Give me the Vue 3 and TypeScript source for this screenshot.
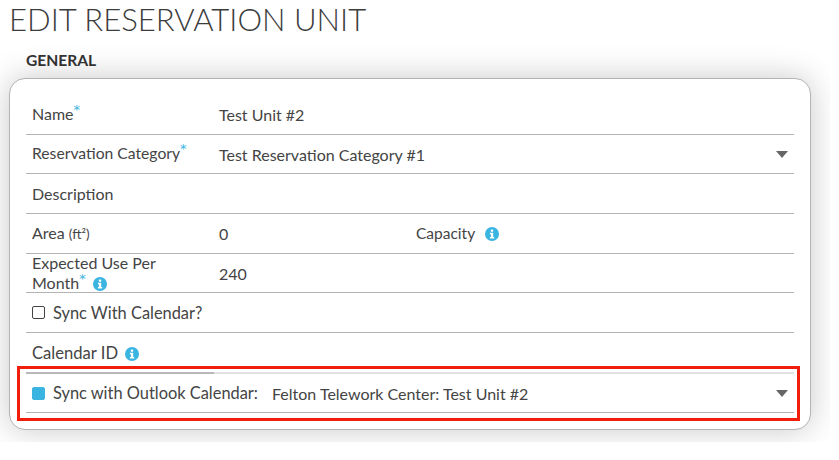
<template>
  <div class="page">
    <h1 class="title">EDIT RESERVATION UNIT</h1>
    <h2 class="section">GENERAL</h2>
    <div class="card">
      <div class="row">
        <div class="label lift">Name<sup class="req">*</sup></div>
        <div class="value">{{ unit.name }}</div>
      </div>
      <div class="row">
        <div class="label tight lift">Reservation Category<sup class="req">*</sup></div>
        <div class="value grow">{{ unit.category }}</div>
        <span class="arrow"></span>
      </div>
      <div class="row">
        <div class="label">Description</div>
      </div>
      <div class="row">
        <div class="label lift">Area <span class="unit">(ft²)</span></div>
        <div class="value mid">{{ unit.area }}</div>
        <div class="label tighter">
          Capacity
          <svg class="info wide" viewBox="0 0 14 14"><use href="#info-icon" /></svg>
        </div>
      </div>
      <div class="row">
        <div class="label two-line">
          Expected Use Per<br />Month<sup class="req">*</sup>
          <svg class="info wider" viewBox="0 0 14 14"><use href="#info-icon" /></svg>
        </div>
        <div class="value">{{ unit.expectedUse }}</div>
      </div>
      <div class="row">
        <span class="check"></span>
        <span class="check-label">Sync With Calendar?</span>
      </div>
      <div class="row row-plain">
        <div class="label big">
          Calendar ID
          <svg class="info" viewBox="0 0 14 14"><use href="#info-icon" /></svg>
        </div>
      </div>
      <div class="rule"><div class="rule-dark"></div></div>
      <div class="row row-last">
        <span class="check on"></span>
        <span class="check-label outlook lift">Sync with Outlook Calendar:</span>
        <div class="grow">{{ unit.outlook }}</div>
        <span class="arrow"></span>
      </div>
      <div class="highlight"></div>
    </div>
    <svg class="defs" width="0" height="0">
      <symbol id="info-icon" viewBox="0 0 14 14">
        <circle cx="7" cy="7" r="7" fill="#3ab4e0" />
        <rect x="5.8" y="2.5" width="2.4" height="2.2" rx="0.5" fill="#fff" />
        <path d="M4.9 5.8H8.2V9.9H9.2V11.4H4.9V9.9H5.9V7.3H4.9Z" fill="#fff" />
      </symbol>
    </svg>
  </div>
</template>

<script setup lang="ts">
const unit = {
  name: 'Test Unit #2',
  category: 'Test Reservation Category #1',
  area: 0,
  expectedUse: 240,
  outlook: 'Felton Telework Center: Test Unit #2',
};
</script>

<style>
html,
body {
  margin: 0;
  background: #fff;
}
</style>

<style scoped>
.page {
  width: 830px;
  height: 442px;
  overflow: hidden;
  font-family: Lato, "Liberation Sans", sans-serif;
  color: #444;
}
.title {
  margin: 0;
  padding: 0 0 0 9px;
  font-size: 31.1px;
  line-height: 38px;
  font-weight: 300;
  color: #3c3c3c;
}
.section {
  margin: 0;
  padding: 13px 0 0 26px;
  height: 27px;
  box-sizing: border-box;
  font-size: 15.6px;
  line-height: 19px;
  font-weight: 700;
  color: #333;
}
.card {
  position: relative;
  box-sizing: border-box;
  margin: 13px 0 0 9px;
  width: 802px;
  height: 352px;
  padding: 16px 16px 0;
  background: #fff;
  border: 1px solid #b4b4b4;
  border-radius: 16px;
  box-shadow: 0 0 32px rgba(0, 0, 0, 0.22);
}
.row {
  display: flex;
  align-items: center;
  box-sizing: border-box;
  height: 39.7px;
  padding: 0 6px;
  border-bottom: 1px solid #b4b4b4;
  font-size: 16px;
}
.row-plain {
  height: 39px;
  border-bottom: none;
}
.row-last {
  height: 39px;
}
.label {
  flex: 0 0 187px;
  box-sizing: border-box;
}
.lift {
  padding-bottom: 2px;
}
.tight {
  font-size: 15.7px;
}
.tighter {
  font-size: 15.5px;
}
.big {
  font-size: 16.6px;
}
.two-line {
  line-height: 20px;
}
.value {
  flex: 0 0 auto;
}
.mid {
  flex: 0 0 197px;
}
.grow {
  flex: 1;
}
.req {
  font-family: "DejaVu Sans", sans-serif;
  color: #3ab4e0;
  font-size: 13px;
  line-height: 0;
}
.unit {
  font-size: 13.5px;
}
.info {
  width: 14px;
  height: 14px;
  margin-left: 3px;
  vertical-align: -2px;
}
.wide {
  margin-left: 6px;
}
.wider {
  margin-left: 7px;
}
.check {
  flex: none;
  box-sizing: border-box;
  width: 13px;
  height: 13px;
  border: 1px solid #444;
  border-radius: 2px;
}
.check.on {
  background: #3ab4e0;
  border-color: #3ab4e0;
}
.check-label {
  margin-left: 8px;
  font-size: 16.4px;
}
.outlook {
  flex: 0 0 219px;
}
.arrow {
  flex: none;
  width: 0;
  height: 0;
  border-style: solid;
  border-width: 7px 6.5px 0;
  border-color: #666 transparent transparent;
}
.rule {
  height: 2px;
  background: #e2e2e2;
}
.rule-dark {
  width: 188px;
  height: 2px;
  background: #b8b8b8;
}
.highlight {
  position: absolute;
  left: 7px;
  right: 10px;
  top: 287px;
  height: 55px;
  box-sizing: border-box;
  border: 3px solid #f01e0a;
  pointer-events: none;
}
.defs {
  position: absolute;
}
</style>
